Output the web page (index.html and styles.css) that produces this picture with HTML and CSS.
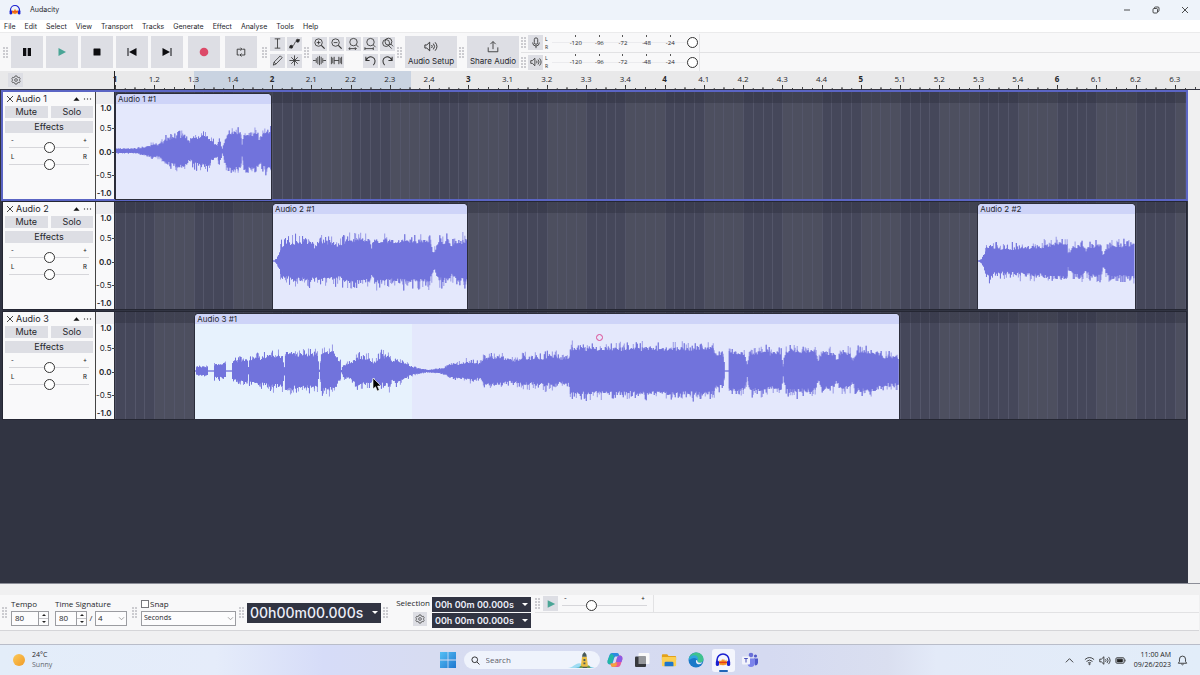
FILE: index.html
```html
<!DOCTYPE html>
<html lang="en">
<head>
<meta charset="utf-8">
<title>Audacity</title>
<link rel="stylesheet" href="styles.css">
</head>
<body>
<svg class="defs" aria-hidden="true">
  <symbol id="i-logo" viewBox="0 0 20 20"><path d="M2.500 13V10a7.500 7.500 0 0 1 15 0v3" fill="none" stroke="#1a1fd0" stroke-width="2"/><path d="M5 13l1-3 1.500 2L9 8.500l1 2.500 1.200-2.500 1.300 3 1.500-2 1 3.500-1 3.500-1.500-1-1.300 1.500-1.200-1-1.200 1-1.300-1.500L6 17z" fill="#f58a1c"/><path d="M5 13h10" stroke="#e33a1e" stroke-width="1.500"/><rect x="1" y="10.500" width="4" height="7" rx="2" fill="#1a1fd0"/><rect x="15" y="10.500" width="4" height="7" rx="2" fill="#1a1fd0"/></symbol>
  <symbol id="i-gear" viewBox="0 0 16 16"><path d="M6.500 1.500h3l.6 1.900 1.300.7 2-.4 1.400 2.500-1.300 1.500v.6l1.300 1.500-1.400 2.500-2-.4-1.300.7-.6 1.900h-3l-.6-1.900-1.300-.7-2 .4-1.400-2.500 1.300-1.500v-.6L1.200 6.200l1.400-2.500 2 .4 1.300-.7z" fill="none" stroke="currentColor" stroke-width="1.200"/><circle cx="8" cy="8" r="2.200" fill="none" stroke="currentColor" stroke-width="1.200"/></symbol>
  <symbol id="i-speaker" viewBox="0 0 16 12"><path d="M1 4.200h2.200L6.500 1v10L3.200 7.800H1zM8.700 4.300q1.400 1.700 0 3.400M10.700 2.700q2.800 3.300 0 6.600M12.700 1.200q4.200 4.800 0 9.600" fill="none" stroke="currentColor" stroke-width="1.100"/></symbol>
  <symbol id="i-lens" viewBox="0 0 14 14"><circle cx="6" cy="6" r="4" fill="none" stroke="currentColor"/><path d="M9 9l3.500 3.500" stroke="currentColor" stroke-width="1.300"/></symbol>
  <symbol id="i-undo" viewBox="0 0 14 14"><path d="M2 3v4h4M2.200 6.800C4 3.500 7 2.500 9.500 3.600c3 1.500 3.200 5.700.6 8.400" fill="none" stroke="currentColor" stroke-width="1.100"/></symbol>
  <symbol id="i-down" viewBox="0 0 8 6"><path d="M1 1.500l3 3 3-3" fill="none" stroke="#888" stroke-width=".9"/></symbol>
</svg>

<header class="titlebar">
  <svg class="logo"><use href="#i-logo"/></svg>
  <span class="app-name">Audacity</span>
  <div class="window-buttons">
    <button aria-label="Minimise"><svg viewBox="0 0 10 10"><path d="M2 5h6"/></svg></button>
    <button aria-label="Restore"><svg viewBox="0 0 10 10"><rect x="2" y="3.500" width="4.500" height="4.500" rx="1"/><path d="M3.500 3V2.500Q3.500 2 4.500 2H7q1 0 1 1v2.500q0 1-1 1"/></svg></button>
    <button aria-label="Close"><svg viewBox="0 0 10 10"><path d="M2 2l6 6M8 2l-6 6"/></svg></button>
  </div>
</header>

<nav class="menubar">
  <button>File</button><button>Edit</button><button>Select</button><button>View</button><button>Transport</button><button>Tracks</button><button>Generate</button><button>Effect</button><button>Analyse</button><button>Tools</button><button>Help</button>
</nav>

<section class="toolbar" aria-label="Toolbars">
  <i class="grip"></i>
  <div class="transport">
    <button aria-label="Pause"><svg viewBox="0 0 12 12"><path d="M2 2h3.300v8H2zM6.700 2H10v8H6.700z"/></svg></button>
    <button aria-label="Play"><svg viewBox="0 0 12 12"><path class="green" d="M2.500 2l7.500 4-7.500 4z"/></svg></button>
    <button aria-label="Stop"><svg viewBox="0 0 12 12"><rect x="2.500" y="2.500" width="7" height="7" rx=".6"/></svg></button>
    <button aria-label="Skip to start"><svg viewBox="0 0 12 12"><path d="M1.500 2h1v8h-1zM10.500 2v8L3 6z"/></svg></button>
    <button aria-label="Skip to end"><svg viewBox="0 0 12 12"><path d="M9.500 2h1v8h-1zM1.500 2v8L9 6z"/></svg></button>
    <button class="apart" aria-label="Record"><svg viewBox="0 0 12 12"><circle class="red" cx="6" cy="6" r="4.300"/></svg></button>
    <button class="apart" aria-label="Loop"><svg viewBox="0 0 12 12"><path class="line" d="M4.500 9H2.200V3.200h4.300M7.500 3.200h2.300V9H5.500M5.500 1.700L7 3.200 5.500 4.700M6.500 7.500L5 9l1.500 1.500"/></svg></button>
  </div>
  <i class="grip"></i>
  <div class="tools tools-edit">
    <button aria-label="Selection tool"><svg viewBox="0 0 14 14"><path d="M4 2h6M7 2v10M4 12h6"/></svg></button>
    <button aria-label="Envelope tool"><svg viewBox="0 0 14 14"><path d="M1 12l2-1.500C8 10 6 4 11 4l2-1.500"/><circle class="dot" cx="3.500" cy="10.500" r="1.600"/><circle class="dot" cx="10.500" cy="4" r="1.600"/></svg></button>
    <button aria-label="Draw tool"><svg viewBox="0 0 14 14"><path d="M2.500 12l.8-3.300L10 2l2 2-6.700 6.900zM3.300 8.700l2 2.200"/></svg></button>
    <button aria-label="Multi-tool"><svg viewBox="0 0 14 14"><path d="M7 1.500v11M1.500 7h11M3.500 3.500l7 7M10.500 3.500l-7 7"/></svg></button>
  </div>
  <i class="grip"></i>
  <div class="tools tools-zoom">
    <button aria-label="Zoom in"><svg viewBox="0 0 14 14"><use href="#i-lens"/><path d="M4 6h4M6 4v4"/></svg></button>
    <button aria-label="Zoom out"><svg viewBox="0 0 14 14"><use href="#i-lens"/><path d="M4 6h4"/></svg></button>
    <button aria-label="Fit selection"><svg viewBox="0 0 14 14"><circle cx="7" cy="5.500" r="4"/><path d="M10 8.500l2.500 2.500M2 12.500h8M3.500 11L2 12.500 3.500 14M8.500 11l1.500 1.500L8.500 14"/></svg></button>
    <button aria-label="Fit project"><svg viewBox="0 0 14 14"><circle cx="7" cy="5.500" r="4"/><path d="M10 8.500l2.500 2.500M1 12.500h9M1 11v3M10 11v3"/></svg></button>
    <button aria-label="Zoom toggle"><svg viewBox="0 0 14 14"><circle cx="5.500" cy="6.500" r="3.700"/><circle cx="8" cy="5" r="3.700"/><path d="M8 9l3.500 3.500M10.500 7.500L13 10"/></svg></button>
    <button aria-label="Trim audio"><svg viewBox="0 0 14 14"><path d="M0 7h3M11 7h3M3.500 4.500v5M5.200 3v8M7 2v10M8.800 3v8M10.500 4.500v5"/></svg></button>
    <button aria-label="Silence audio"><svg viewBox="0 0 14 14"><path d="M1.500 3v8M3 4v6M4.500 3v8M9.500 3v8M11 4v6M12.500 3v8M4.500 7h5"/></svg></button>
    <span></span>
    <button aria-label="Undo"><svg><use href="#i-undo"/></svg></button>
    <button aria-label="Redo"><svg class="flip"><use href="#i-undo"/></svg></button>
  </div>
  <i class="grip"></i>
  <button class="labelled"><svg viewBox="0 0 16 12"><use href="#i-speaker"/></svg>Audio Setup</button>
  <i class="grip"></i>
  <button class="labelled"><svg viewBox="0 0 16 14"><path d="M2.500 8v5h11V8M8 10V1.500M5 4.300l3-3 3 3"/></svg>Share Audio</button>
  <div class="meters">
    <div class="meter-row">
      <i class="grip small"></i>
      <button aria-label="Record meter"><svg viewBox="0 0 14 14"><rect x="5" y="1" width="4" height="7.500" rx="2"/><path d="M3 6.500Q3.300 10.500 7 10.500T11 6.500M7 10.500V13"/></svg></button>
      <span class="channels"><b>L</b><b>R</b></span>
      <div class="meter"><input type="range" value="100" aria-label="Recording volume"><div class="scale-db"><span>-120</span><span>-96</span><span>-72</span><span>-48</span><span>-24</span></div></div>
    </div>
    <div class="meter-row">
      <i class="grip small"></i>
      <button aria-label="Playback meter"><svg viewBox="0 0 16 12"><use href="#i-speaker"/></svg></button>
      <span class="channels"><b>L</b><b>R</b></span>
      <div class="meter"><input type="range" value="100" aria-label="Playback volume"><div class="scale-db"><span>-120</span><span>-96</span><span>-72</span><span>-48</span><span>-24</span></div></div>
    </div>
  </div>
</section>

<div class="ruler">
  <div class="ruler-head"><button aria-label="Timeline options"><svg><use href="#i-gear"/></svg></button></div>
  <div class="beats" id="beats"></div>
</div>

<main class="workspace">
  <div class="tracks">
    <article class="track selected" data-name="Audio 1">
      <div class="lane">
        <div class="clip clip-1"><h3>Audio 1 #1</h3><svg class="wave" data-wave="a1"></svg></div>
      </div>
    </article>
    <article class="track" data-name="Audio 2">
      <div class="lane">
        <div class="clip clip-2"><h3>Audio 2 #1</h3><svg class="wave" data-wave="a2"></svg></div>
        <div class="clip clip-3"><h3>Audio 2 #2</h3><svg class="wave" data-wave="a2b"></svg></div>
      </div>
    </article>
    <article class="track" data-name="Audio 3">
      <div class="lane">
        <div class="clip clip-4"><h3>Audio 3 #1</h3><svg class="wave" data-wave="a3"></svg></div>
        <i class="marker"></i>
        <svg class="cursor" viewBox="0 0 10 15"><path d="M1 1v11l2.500-2.300L5.300 14l2-.9L5.600 9H9z" fill="#000" stroke="#fff" stroke-width=".6"/></svg>
      </div>
    </article>
  </div>
</main>

<section class="bottombar" aria-label="Project settings">
  <i class="grip"></i>
  <div class="field tempo">
    <label for="tempo">Tempo</label>
    <div class="spin"><input id="tempo" value="80"><span class="arrows"><button aria-label="Up"></button><button class="dn" aria-label="Down"></button></span></div>
  </div>
  <div class="field signature">
    <label for="upper">Time Signature</label>
    <div class="row">
      <div class="spin"><input id="upper" value="80"><span class="arrows"><button aria-label="Up"></button><button class="dn" aria-label="Down"></button></span></div>
      <span>/</span>
      <div class="pick"><select aria-label="Lower time signature"><option>4</option></select><svg><use href="#i-down"/></svg></div>
    </div>
  </div>
  <i class="grip"></i>
  <div class="field snap">
    <label><input type="checkbox">Snap</label>
    <div class="pick"><select class="unit" aria-label="Snap to"><option>Seconds</option></select><svg><use href="#i-down"/></svg></div>
  </div>
  <i class="grip"></i>
  <button class="time time-big">00h00m00.000s<i></i></button>
  <i class="grip"></i>
  <div class="selection">
    <div class="selection-head"><span>Selection</span><button aria-label="Selection options"><svg><use href="#i-gear"/></svg></button></div>
    <div class="times"><button class="time">00h 00m 00.000s<i></i></button><button class="time">00h 00m 00.000s<i></i></button></div>
  </div>
  <div class="speed-area">
    <div class="speed">
      <i class="grip small"></i>
      <button aria-label="Play at speed"><svg viewBox="0 0 12 12"><path d="M2 1.500L11 6l-9 4.500z"/></svg></button>
      <div class="fader"><div><span>-</span><span>+</span></div><input type="range" value="32" aria-label="Playback speed"></div>
    </div>
  </div>
</section>

<footer class="taskbar">
  <div class="weather"><i class="sun"></i><div><span>24°C</span><small>Sunny</small></div></div>
  <div class="apps">
    <button aria-label="Start"><svg viewBox="0 0 16 16"><defs><linearGradient id="wg" x2="1" y2="1"><stop stop-color="#55c0f5"/><stop offset="1" stop-color="#1f77cf"/></linearGradient></defs><path fill="url(#wg)" d="M0 0h7.600v7.600H0zM8.400 0H16v7.600H8.400zM0 8.400h7.600V16H0zM8.400 8.400H16V16H8.400z"/></svg></button>
    <label class="search"><svg viewBox="0 0 12 12"><circle cx="5" cy="5" r="3.800"/><path d="M8 8l3.300 3.300"/></svg><input type="text" placeholder="Search"><svg class="lighthouse" viewBox="0 0 32 18"><path fill="#9fdcf2" d="M0 17c5 0 8-5 12-5l8 2 8 3z"/><path fill="#5fbcdf" d="M5 17c6 0 8-3 12-3s8 3 12 3z"/><path fill="#e9bf45" d="M15 5h5l1.500 12h-8z"/><path fill="#4a5a58" d="M15 5h5l-.5-2.500L17.500 0 15.500 2.500zM14 15.500h8V17h-8zM16.500 7.500h2v2h-2zM16.500 11h2v2h-2z"/><path fill="#6f9b4c" d="M12 17q2-5 4 0zM20 17q2-6 4 0z"/></svg></label>
    <button aria-label="Copilot"><svg viewBox="0 0 16 16"><path fill="#2b8be0" d="M5 1h5c2 0 2 2 2.500 3.500H9C7 4.500 7 7 6 10c-.6 2-1.500 2.500-3 2.500S0 11 .7 8.500L2.500 3Q3.200 1 5 1z"/><path fill="#22b8a5" d="M2.500 4l2-2.500L7 4 5 12H2.500Q0 12 .7 8.500z"/><path fill="#e75a9b" d="M11 15H6c-2 0-2-2-2.500-3.500H7c2 0 2-2.500 3-5.500.6-2 1.500-2.500 3-2.500s3 1.500 2.300 4L13.500 13q-.7 2-2.500 2z"/><path fill="#8a5be6" d="M10 6q1-2.500 3-2.500 3 .5 2.300 4l-.8 2.500H9z"/><path fill="#f6a13c" d="M3.500 11.500H7q1.500 0 2.200-2L10 13q-1 2-4 2-2 0-2.500-3.500z"/></svg></button>
    <button aria-label="Task view"><svg viewBox="0 0 16 16"><rect x="4.500" y="1" width="11" height="11" rx="1" fill="#fafafa"/><rect x="1" y="4.500" width="11" height="10.500" rx="1" fill="#37393d"/><path fill="#96989c" d="M4.500 4.500H12v7.500H4.500z"/></svg></button>
    <button aria-label="Files"><svg viewBox="0 0 18 16"><path fill="#e3a21a" d="M1 2.500q0-1 1-1h5l1.500 2H16q1 0 1 1V8H1z"/><rect x="1" y="4.500" width="16" height="10.500" rx="1" fill="#fbcf52"/><path fill="#1c76cc" d="M4 15v-3.500q0-1.500 1.500-1.500h7q1.500 0 1.500 1.500V15z"/></svg></button>
    <button aria-label="Edge"><svg viewBox="0 0 16 16"><circle cx="8" cy="8" r="7.500" fill="#1a79c9"/><path fill="#3fc28e" d="M.7 7C1.500 2.800 5 .5 8.500.5c4 0 7 3 7 6.500 0 2.300-1.500 3.600-3.500 3.600-1.800 0-2.800-.8-2.500-1.600.8-1.500.2-4-2.700-4C4 5 1.500 5.500.7 7z"/><path fill="#2fa6dd" d="M.7 7C1.500 4.500 4 3 6.500 3.300 10 3.700 10.600 7 9.500 9c-.3-2-1.800-3-3-3C3 6 1.500 9 .7 7z"/><path fill="#e6edf8" d="M9.500 9c-.3.800.7 1.700 2.500 1.700 1 0 2-.3 2.600-.8q-1.600 3-4.600 2.300Q7.600 11.500 8 8.500q.8-1 1.500.5z"/></svg></button>
    <button class="active" aria-label="Audacity"><svg><use href="#i-logo"/></svg></button>
    <button aria-label="Teams"><svg viewBox="0 0 16 16"><circle cx="9" cy="3" r="2.300" fill="#6a70d8"/><circle cx="13.500" cy="4" r="1.600" fill="#5059c9"/><path fill="#5059c9" d="M12 6.500h4V11q-.5 2.500-3 2.500z"/><path fill="#7b83eb" d="M5.500 6.500H13V11q-.5 4-4 4t-3.500-4z"/><rect y="4.500" width="8" height="8" rx="1" fill="#f2f3fc"/><path d="M2.200 6.500h3.600M4 6.500v4" stroke="#4b53bc" fill="none"/></svg></button>
  </div>
  <div class="tray">
    <svg viewBox="0 0 12 12"><path d="M2 8l4-4 4 4"/></svg>
    <svg viewBox="0 0 12 12"><path d="M1 5q5-4.500 10 0M2.700 7q3.300-3 6.600 0M4.300 8.800q1.700-1.500 3.400 0"/><circle cx="6" cy="10" r=".6"/></svg>
    <svg class="wide" viewBox="0 0 16 12"><use href="#i-speaker"/></svg>
    <svg viewBox="0 0 12 12"><rect x="1" y="3" width="9" height="6" rx="1.200"/><path fill="currentColor" d="M2.500 4.500H8v3H2.500zM11 5v2"/></svg>
    <div class="clock"><span>11:00 AM</span><span>09/26/2023</span></div>
    <svg class="bell" viewBox="0 0 12 12"><path d="M1.500 9h9L9.300 7V4.500a3.300 3.300 0 0 0-6.600 0V7zM4.800 10q1.200 1.500 2.400 0"/></svg>
  </div>
</footer>
<script src="app.js"></script>
</body>
</html>
```

FILE: styles.css
```css
* { box-sizing: border-box; }
body {
  margin: 0;
  min-height: 100vh;
  display: flex;
  flex-direction: column;
  background: #f0f0f1;
  color: #25262b;
  font: 8px/10px "Open Sans", sans-serif;
}
button, input, select {
  font: inherit;
  color: inherit;
  border: 0;
  padding: 0;
  margin: 0;
  background: none;
  border-radius: 0;
}
svg { display: block; fill: none; stroke: none; }
.defs { position: absolute; width: 0; height: 0; }

/* window chrome */
.titlebar { display: flex; align-items: center; height: 20px; padding: 0 5px 0 9px; background: #eef3fa; }
.logo { width: 12px; height: 12px; }
.app-name { margin-left: 9px; font: 7px/10px Inter, sans-serif; }
.window-buttons { margin-left: auto; display: flex; gap: 9px; }
.window-buttons button { width: 20px; height: 20px; display: grid; place-items: center; }
.window-buttons svg { width: 10px; height: 10px; stroke: #222; stroke-width: .8; }
.menubar { display: flex; gap: 9px; height: 12px; padding: 1px 0 0 4px; background: #fff; font: 7px/12px Inter, sans-serif; }

/* upper toolbar */
.toolbar { display: flex; align-items: center; height: 39px; padding-left: 1px; background: #f8f8f9; border-top: 1px solid #ebebec; }
.toolbar button, .ruler button, .speed button, .selection-head button {
  display: grid;
  place-items: center;
  background: #dddee4;
}
.grip {
  flex: none;
  width: 5px;
  height: 11px;
  margin: 0 3px 0 2px;
  background: radial-gradient(circle at 1px 1px, #bcbcc2 0 0.6px, transparent 1px) 0 0 / 3px 3px;
}
.grip.small { margin: 0 2px 0 0; }
.transport { display: flex; gap: 3px; margin: 0 3px 0 0; }
.transport button { width: 32px; height: 32px; }
.transport button.apart { margin-left: 2px; }
.transport svg { width: 12px; height: 12px; fill: #0d0d10; }
.transport .green { fill: #4aa596; }
.transport .red { fill: #dc4a68; }
.transport .line { fill: none; stroke: #333; stroke-width: .9; }
.tools { display: grid; gap: 3px 2px; }
.tools-edit { grid-template-columns: repeat(2, 15px); }
.tools-zoom { grid-template-columns: repeat(5, 15px); }
.tools button { height: 14px; }
.tools svg { width: 13px; height: 13px; stroke: #333; stroke-width: .9; color: #333; }
.tools .dot { fill: #222; }
.flip { transform: scaleX(-1); }
.toolbar .labelled {
  width: 52px;
  height: 32px;
  padding-top: 2px;
  grid-template-rows: 16px 13px;
  font: 8px/10px Inter, sans-serif;
  white-space: nowrap;
}
.labelled svg { width: 14px; height: 13px; stroke: #333; color: #333; }
.meters { flex: 1; align-self: stretch; display: grid; grid-template-rows: 1fr 1fr; margin-left: 2px; }
.meter-row { display: flex; align-items: center; }
.meter-row + .meter-row { border-top: 1px solid #e2e2e4; }
.meter-row button { width: 15px; height: 15px; }
.meter-row svg { width: 12px; height: 12px; stroke: #333; color: #333; }
.channels { display: grid; width: 9px; padding-left: 2px; font-size: 5px; line-height: 8px; }
.channels b { font-weight: 400; }
.meter { position: relative; width: 148px; height: 18px; border-right: 1px solid #e4e4e6; }
.scale-db { position: relative; pointer-events: none; display: flex; width: 118px; margin-left: 12px; font-size: 6px; line-height: 8px; }
.scale-db span {
  flex: 1;
  padding-top: 5px;
  text-align: center;
  background: linear-gradient(#555, #555) 50% 1px / 1px 2px no-repeat;
}
.meter input { position: absolute; left: 0; top: 4px; width: 146px; }

/* sliders */
input[type=range] {
  appearance: none;
  height: 10px;
  background: linear-gradient(#d6d6da, #d6d6da) 0 50% / 100% 1px no-repeat;
}
.meter input[type=range] { background-image: linear-gradient(#ebebee, #ebebee); }
input[type=range]::-webkit-slider-thumb {
  appearance: none;
  width: 11px;
  height: 11px;
  border: 1px solid #333;
  border-radius: 50%;
  background: #fff;
}
.fader { display: flex; flex-direction: column; height: 17px; }
.fader div { display: flex; justify-content: space-between; padding: 0 2px; font: 500 6px/6px Inter, sans-serif; }
.fader input { width: 100%; margin-top: -1px; }

/* timeline ruler */
.ruler { display: flex; height: 19px; background: #e9e9ea; border-bottom: 1px solid #33343f; }
.ruler-head { width: 114px; padding: 2px 0 0 8px; }
.ruler button { width: 15px; height: 14px; }
.ruler svg { width: 10px; height: 10px; color: #444; }
.beats { flex: 1; min-width: 0; display: flex; border-left: 1px solid #222; }
.beat {
  flex: 0 0 3.618%;
  padding-top: 3px;
  font-size: 8px;
  background:
    linear-gradient(90deg, #444 1px, transparent 1px) 0 100% / 25% 1px repeat-x,
    linear-gradient(90deg, #444 1px, transparent 1px) 0 100% / 50% 2px repeat-x,
    linear-gradient(90deg, #333 1px, transparent 1px) 0 100% / 100% 4px no-repeat;
}
.beat:last-child { flex: 1 1 0; min-width: 0; background-size: 10px 1px, 20px 2px, 100% 4px; }
.beat.in { background-color: #c9d3e1; }
.beat.half {
  background-image:
    linear-gradient(90deg, #444 1px, transparent 1px),
    linear-gradient(90deg, #444 1px, transparent 1px),
    linear-gradient(90deg, #333 1px, transparent 1px),
    linear-gradient(90deg, #c9d3e1 54%, transparent 54%);
  background-position: 0 100%, 0 100%, 0 100%, 0 0;
  background-size: 25% 1px, 50% 2px, 100% 4px, 100% 100%;
}
.beat span { display: flex; justify-content: center; width: 0; }
.beat.bar { font-weight: 700; }

/* tracks */
.workspace { flex: 1; display: flex; padding-right: 12px; border-bottom: 1px solid #8c8e98; }
.tracks { flex: 1; display: flex; flex-direction: column; gap: 3px; padding: 2px 2px 0 3px; background: #313442; }
.track { display: flex; min-height: 107px; box-shadow: 0 0 0 1px #252733; }
.track.selected { outline: 2px solid #5b65c4; box-shadow: none; }
.panel { width: 92px; padding: 0 2px; background: #f9f9fa; font: 9px/12px Inter, sans-serif; }
.panel header { display: flex; align-items: center; height: 14px; padding: 0 1px; }
.panel h2 { flex: 1; margin: 0 0 0 2px; font: inherit; }
.panel header svg { width: 8px; height: 8px; stroke: #333; stroke-width: .9; }
.panel header .tri { width: 7px; fill: #111; stroke: none; }
.panel header .dots { width: 9px; margin-left: 3px; fill: #444; stroke: none; }
.pair { display: grid; grid-template-columns: 1fr 1fr; gap: 3px; margin-bottom: 3px; }
.pair button, .effects { height: 12px; line-height: 12px; background: #dddee4; }
.effects { width: 100%; display: block; margin-bottom: 4px; }
.panel .fader { margin: 0 4px; }
.axis {
  display: grid;
  grid-template-rows: 20px 24px 23px 18px 10px;
  width: 20px;
  padding-top: 11px;
  border-left: 1px solid #444;
  border-right: 1px solid #2a2c38;
  background: linear-gradient(#ebebef 12px, #f9f9fa 12px);
  font: 8px/10px Inter, sans-serif;
}
.axis span { display: flex; justify-content: flex-end; padding-right: 3px; align-items: center; height: 10px; }
.axis .major { font-weight: 600; }
.axis .tick { padding-right: 0; }
.axis .tick::after { content: ""; width: 3px; height: 1px; background: #444; }
.lane {
  position: relative;
  flex: 1;
  background:
    linear-gradient(rgba(40, 42, 56, .35) 11px, transparent 11px),
    repeating-linear-gradient(90deg, #54566a 0 1px, transparent 1px .9162%),
    repeating-linear-gradient(90deg, #45475a 0 3.665%, #4d4f5f 3.665% 7.33%);
}
.clip {
  position: absolute;
  top: 2px;
  bottom: 0;
  display: flex;
  flex-direction: column;
  overflow: hidden;
  border-radius: 4px 4px 0 0;
  background: #e4e8fc;
  box-shadow: 0 0 0 1px #2b2d3a;
}
.clip h3 { height: 10px; margin: 0; padding-left: 2px; background: #ced4f8; font: 8px/11px Inter, sans-serif; }
.wave { flex: 1; width: 100%; min-height: 0; }
.wave .peak { fill: #9798e6; }
.wave .body { fill: #7173dc; }
.clip-1 { left: .1%; width: 14.5%; }
.clip-2 { left: 14.75%; width: 18.15%; }
.clip-3 { left: 80.6%; width: 14.6%; }
.clip-4 { left: 7.5%; width: 65.7%; background: linear-gradient(90deg, #e7f2fd 30.8%, #e4e8fc 30.8%); }
.marker { position: absolute; left: 44.9%; top: 22px; width: 7px; height: 7px; border: 1px solid #dc4a94; border-radius: 50%; }
.cursor { position: absolute; left: 24%; top: 65px; width: 10px; height: 15px; }

/* bottom toolbar */
.bottombar { display: flex; align-items: center; height: 36px; margin: 11px 1px 13px 0; background: #f8f8f9; border-bottom: 1px solid #d5d5d8; }
.field { display: flex; flex-direction: column; gap: 1px; padding-bottom: 2px; }
.field label { display: flex; align-items: center; height: 12px; white-space: nowrap; }
.tempo { width: 38px; margin-left: 1px; }
.signature { width: 72px; margin: 0 3px 0 6px; }
.row { display: flex; align-items: center; justify-content: space-between; }
.spin, .pick { position: relative; display: flex; height: 15px; border: 1px solid #9b9ca1; background: #fcfcfd; }
.row .spin { width: 32px; }
.row .pick { width: 32px; }
.spin input { flex: 1; min-width: 0; padding-left: 3px; }
.arrows { display: grid; width: 10px; border-left: 1px solid #9b9ca1; }
.arrows button { display: grid; place-items: center; }
.arrows button::before { content: ""; border: 2px solid transparent; border-top-width: 0; border-bottom: 2px solid #222; }
.arrows .dn { border-top: 1px solid #c4c4c8; }
.arrows .dn::before { border-bottom: 0; border-top: 2px solid #222; }
.pick select { flex: 1; appearance: none; padding-left: 2px; }
.pick .unit { font-size: 7px; }
.pick svg { position: absolute; right: 1px; top: 4px; width: 7px; height: 5px; }
.snap { width: 95px; margin: 0 1px; }
.snap label input { appearance: none; width: 8px; height: 8px; margin-right: 1px; border: 1px solid #77787d; background: #fff; }
.time {
  display: flex;
  align-items: center;
  justify-content: space-between;
  padding: 0 3px;
  background: #313442;
  color: #eceef8;
  font: 600 9px/15px Inter, sans-serif;
  white-space: pre;
}
.time i { border: 3px solid transparent; border-top-color: #fff; border-bottom-width: 0; }
.time-big { width: 134px; height: 20px; font: 500 14px/20px Inter, sans-serif; }
.selection { display: flex; margin-left: 3px; }
.selection-head { display: flex; flex-direction: column; align-items: flex-end; gap: 4px; width: 38px; padding: 1px 2px 0 0; }
.selection-head button { width: 14px; height: 14px; margin-right: 3px; }
.selection-head svg { width: 10px; height: 10px; color: #444; }
.times { display: grid; gap: 1px; width: 99px; }
.times .time { height: 15px; }
.speed-area { flex: 1; align-self: stretch; display: grid; grid-template-rows: 1fr 1fr; margin-left: 4px; }
.speed { display: flex; align-items: center; border-bottom: 1px solid #e2e2e4; }
.speed button { width: 15px; height: 15px; margin: 0 4px 0 1px; }
.speed svg { width: 10px; height: 10px; fill: #4aa596; }
.speed .fader { width: 92px; padding-right: 6px; border-right: 1px solid #e2e2e4; }

/* taskbar */
.taskbar {
  display: flex;
  align-items: center;
  height: 31px;
  border-top: 1px solid #b9bdc9;
  background: linear-gradient(90deg, #e3edf9 0, #e5ecfa 18%, #d6dcf8 27%, #d7dcf1 36%, #d5daf1 64%, #dadff0 74%, #e3eaf8 78%, #e2edf9 100%);
}
.weather, .tray { flex: 1; display: flex; align-items: center; }
.weather { gap: 7px; padding-left: 13px; font-size: 7px; }
.weather span, .weather small { display: block; font-size: 7px; }
.weather small { color: #62656e; }
.sun { width: 12px; height: 12px; border-radius: 50%; background: linear-gradient(135deg, #fbc95a, #f09a26); }
.apps { display: flex; align-items: center; gap: 4px; padding-right: 3px; }
.apps button { width: 23px; height: 23px; display: grid; place-items: center; border-radius: 3px; }
.apps button svg { width: 16px; height: 16px; }
.apps .active { background: #f4f6fd; position: relative; }
.apps .active::after { content: ""; position: absolute; left: 7px; bottom: 0; width: 9px; height: 2px; border-radius: 1px; background: #1f66b8; }
.search { display: flex; align-items: center; width: 136px; height: 18px; padding: 0 1px 0 7px; border-radius: 9px; background: #eff3fc; }
.search svg { flex: none; width: 9px; height: 9px; stroke: #222; stroke-width: 1.2; }
.search input { flex: 1; min-width: 0; margin-left: 6px; }
.search input::placeholder { color: #5d6068; opacity: 1; }
.search .lighthouse { width: 32px; height: 17px; stroke: none; }
.tray { justify-content: flex-end; gap: 4px; padding-right: 12px; color: #222; }
.tray svg { width: 11px; height: 11px; stroke: #222; stroke-width: .9; }
.tray svg:first-child { margin-right: 5px; }
.tray .wide { width: 12px; }
.clock { width: 41px; margin-right: 2px; font-size: 7px; text-align: right; }
.clock span { display: block; }
```

FILE: app.js
```js
const SVG = "http://www.w3.org/2000/svg";

// Ruler labels, one per beat
const names = ["1", "1.2", "1.3", "1.4"];
for (let bar = 2; bar <= 6; bar++) {
  names.push(String(bar));
  for (let b = 1; b <= 4; b++) names.push(bar + "." + b);
}
document.getElementById("beats").innerHTML = names.slice(0, 28).map((n, i) => {
  let c = "beat";
  if (!n.includes(".")) c += " bar";
  if (i >= 2 && i < 7) c += " in";
  if (i === 7) c += " half";
  return `<div class="${c}"><span>${n}</span></div>`;
}).join("");

// Control panel and amplitude axis of each track
document.querySelectorAll(".track").forEach(track => {
  const name = track.dataset.name;
  track.insertAdjacentHTML("afterbegin", `
    <div class="panel">
      <header>
        <button aria-label="Close ${name}"><svg viewBox="0 0 8 8"><path d="M1 1l6 6M7 1L1 7"/></svg></button>
        <h2>${name}</h2>
        <button aria-label="Collapse"><svg class="tri" viewBox="0 0 8 8"><path d="M4 2l3.500 4h-7z"/></svg></button>
        <button aria-label="Menu"><svg class="dots" viewBox="0 0 9 8"><circle cx="1.500" cy="4" r=".7"/><circle cx="4.500" cy="4" r=".7"/><circle cx="7.500" cy="4" r=".7"/></svg></button>
      </header>
      <div class="pair"><button>Mute</button><button>Solo</button></div>
      <button class="effects">Effects</button>
      <div class="fader"><div><span>-</span><span>+</span></div><input type="range" value="50" aria-label="Gain"></div>
      <div class="fader"><div><span>L</span><span>R</span></div><input type="range" value="50" aria-label="Pan"></div>
    </div>
    <div class="axis"><span class="major">1.0</span><span class="tick">0.5</span><span class="major tick">0.0</span><span class="tick">-0.5</span><span class="major">-1.0</span></div>`);
});

// Envelopes: [position, level] pairs; spike is the extra height of the peaks
const waves = {
  a1: { width: 157, spike: 6, seed: 7, points: [[0,2],[20,2],[30,4],[36,6],[41,5],[46,8],[52,12],[57,14],[66,15],[71,14],[74,8],[77,12],[86,14],[92,14],[96,10],[102,5],[104,12],[107,2],[109,9],[113,18],[125,18],[127,5],[129,17],[142,16],[145,11],[148,17],[157,18]] },
  a2: { width: 194, spike: 9, seed: 21, points: [[0,0],[3,2],[6,8],[8,15],[20,18],[38,19],[40,13],[44,18],[60,18],[66,15],[72,20],[96,20],[98,14],[101,20],[130,19],[156,20],[160,7],[164,17],[174,19],[179,13],[182,19],[194,19]] },
  a2b: { width: 157, spike: 7, seed: 33, points: [[0,0],[3,2],[6,7],[8,15],[20,12],[45,13],[60,14],[85,17],[89,17],[90,7],[95,13],[104,16],[108,10],[112,15],[123,15],[125,6],[130,14],[157,17]] },
  a3: { width: 704, spike: 7, seed: 5, points: [[0,0],[1,4],[12,4],[13,0],[18,0],[19,6],[30,7],[31,0],[36,0],[37,9],[52,11],[53,3],[54,12],[70,13],[72,15],[87,15],[89,4],[90,17],[105,16],[122,16],[124,1],[126,18],[138,18],[141,13],[145,9],[146,1],[148,6],[155,7],[162,13],[174,13],[178,7],[183,13],[194,14],[197,8],[200,11],[208,8],[215,4],[225,2],[233,1],[245,2],[250,3],[253,6],[265,7],[275,9],[285,7],[290,13],[305,13],[318,10],[325,12],[345,13],[360,14],[365,11],[374,14],[375,22],[400,22],[440,22],[518,22],[520,16],[528,15],[530,0],[533,0],[534,19],[549,18],[552,6],[555,18],[573,18],[575,17],[586,18],[588,5],[591,20],[620,19],[623,9],[627,18],[639,16],[641,10],[645,17],[655,17],[657,10],[662,19],[678,19],[690,14],[704,14]] }
};

function levelAt(points, x) {
  for (let i = 1; i < points.length; i++) {
    const [x0, y0] = points[i - 1], [x1, y1] = points[i];
    if (x <= x1) return y0 + (y1 - y0) * (x - x0) / (x1 - x0);
  }
  return points[points.length - 1][1];
}

document.querySelectorAll("[data-wave]").forEach(svg => {
  const w = waves[svg.dataset.wave], mid = 47;
  let seed = w.seed;
  const rnd = () => (seed = (seed * 16807) % 2147483647) / 2147483647;
  for (let i = 0; i < 9; i++) rnd();
  svg.setAttribute("viewBox", `0 0 ${w.width} 95`);
  svg.setAttribute("preserveAspectRatio", "none");
  let peak = "", body = "";
  for (let x = 0; x < w.width; x++) {
    const e = levelAt(w.points, x);
    const part = Math.min(1, e / 14);
    const jag = () => (rnd() - .5) * 4 * part;
    const up = Math.max(.5, e + jag()), down = Math.max(.5, e + jag());
    const s = () => (rnd() > .5 ? rnd() * w.spike * part : 0);
    const pu = up + s(), pd = down + s();
    const bar = (a, b) => `M${x} ${(mid - a).toFixed(1)}h1V${(mid + b).toFixed(1)}h-1z`;
    peak += bar(pu, pd);
    body += bar(rnd() > .6 ? pu : up, rnd() > .6 ? pd : down);
  }
  [["peak", peak], ["body", body]].forEach(([name, d]) => {
    const path = document.createElementNS(SVG, "path");
    path.setAttribute("class", name);
    path.setAttribute("d", d);
    svg.appendChild(path);
  });
});
```
